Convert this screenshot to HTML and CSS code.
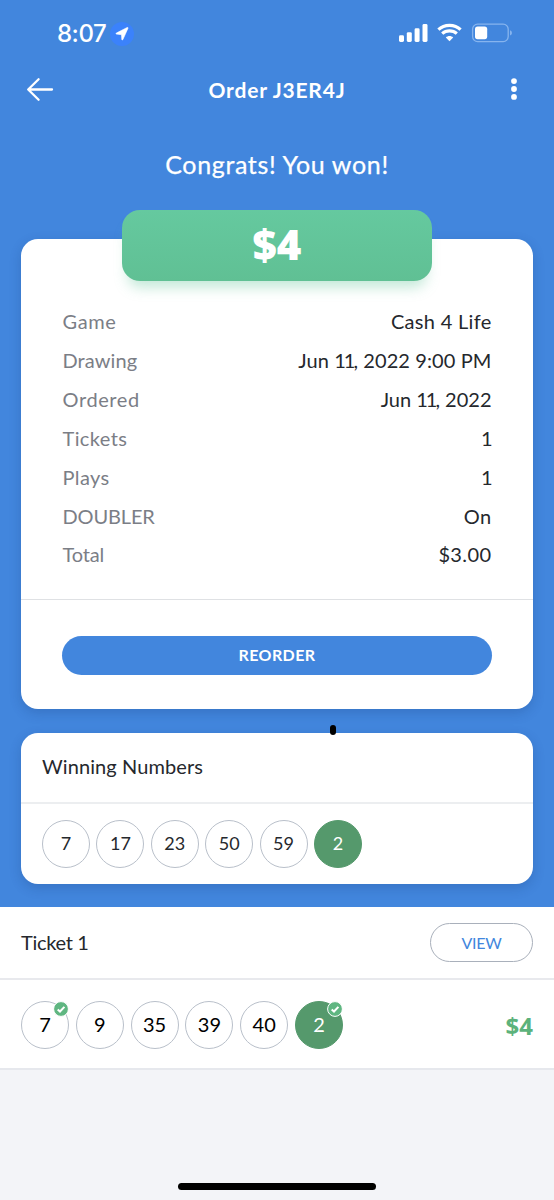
FILE: index.html
```html
<!DOCTYPE html>
<html lang="en">
<head>
<meta charset="utf-8">
<title>Order J3ER4J</title>
<link rel="stylesheet" href="styles.css">
</head>
<body>
<div class="screen">
  <div class="hero">
    <div class="status">
      <div class="status-left">
        <span class="time">8:07</span>
        <span class="location"><svg width="24" height="24" viewBox="0 0 24 24"><path d="M18 6.2 12.8 17.7Q12.2 18.6 11.8 17.4L11.5 12.7 6.4 12.1Q5.4 11.7 6.3 11.1L17.2 5.5Q18.2 5.2 18 6.2Z" fill="#fff" stroke="#fff" stroke-width=".6"/></svg></span>
      </div>
      <svg class="status-icons" width="114" height="20" viewBox="0 0 114 20">
        <g fill="#fff">
          <rect x="0" y="12.3" width="5" height="6.7" rx="1.4"/>
          <rect x="7.8" y="9.2" width="5" height="9.8" rx="1.4"/>
          <rect x="15.6" y="5.3" width="5" height="13.7" rx="1.4"/>
          <rect x="23.5" y="1" width="5" height="18" rx="1.4"/>
        </g>
        <g fill="none" stroke="#fff" stroke-width="3.1">
          <path d="M39.4 6.7C45.3.9 55.7.9 61.6 6.7"/>
          <path d="M43.2 10.7C47.2 6.9 53.8 6.9 57.8 10.7"/>
        </g>
        <path d="M46.8 14.4C48.9 12.4 52.1 12.4 54.2 14.4L50.5 18.3Z" fill="#fff"/>
        <rect x="73.6" y="1.2" width="35.6" height="17.4" rx="5" fill="none" stroke="#86b4ee" stroke-width="1.3"/>
        <rect x="76" y="3.6" width="12.2" height="12.6" rx="2.6" fill="#fff"/>
        <path d="M111 7.2Q113 8 113 9.9T111 12.6Z" fill="#86b4ee"/>
      </svg>
    </div>
    <div class="nav">
      <svg width="28" height="26" viewBox="0 0 28 26"><path d="M26 12.5H2.4M12.6 2.3 2.2 12.5 12.6 22.7" fill="none" stroke="#fff" stroke-width="2.3" stroke-linecap="round" stroke-linejoin="round"/></svg>
      <h1 class="title">Order J3ER4J</h1>
      <svg class="more" width="6" height="22" viewBox="0 0 6 22" fill="#fff"><circle cx="3" cy="3.1" r="2.9"/><circle cx="3" cy="11" r="2.9"/><circle cx="3" cy="18.9" r="2.9"/></svg>
    </div>
    <p class="congrats"><span>Congrats! You won!</span></p>
    <div class="card order">
      <div class="prize"><span>$4</span></div>
      <dl class="details">
        <div class="row"><dt class="loose">Game</dt><dd class="v-game">Cash 4 Life</dd></div>
        <div class="row"><dt class="snug">Drawing</dt><dd class="v-drawing">Jun <span class="day">11</span>, 2022 9:00 PM</dd></div>
        <div class="row"><dt class="loose">Ordered</dt><dd class="v-ordered">Jun <span class="day">11</span>, 2022</dd></div>
        <div class="row"><dt>Tickets</dt><dd class="single">1</dd></div>
        <div class="row"><dt>Plays</dt><dd class="single">1</dd></div>
        <div class="row"><dt class="tight">DOUBLER</dt><dd>On</dd></div>
        <div class="row"><dt class="tight">Total</dt><dd>$3.00</dd></div>
      </dl>
      <div class="actions"><button class="reorder">REORDER</button></div>
    </div>
    <div class="card winning">
      <span class="dot"></span>
      <h2 class="winning-title">Winning Numbers</h2>
      <div class="balls">
        <span class="ball">7</span><span class="ball">17</span><span class="ball">23</span><span class="ball">50</span><span class="ball">59</span><span class="ball special">2</span>
      </div>
    </div>
  </div>
  <div class="ticket">
    <div class="ticket-head"><h2 class="ticket-title">Ticket 1</h2><button class="view">VIEW</button></div>
    <div class="ticket-row">
      <div class="balls picks">
        <span class="ball">7<svg class="check" width="16" height="16" viewBox="0 0 16 16"><circle cx="8" cy="8" r="7.4" fill="#5fb681" stroke="#fff"/><path d="M4.7 8.4 7 10.5 11.4 5.9" fill="none" stroke="#fff" stroke-width="2"/></svg></span><span class="ball">9</span><span class="ball">35</span><span class="ball">39</span><span class="ball">40</span><span class="ball special">2<svg class="check" width="16" height="16" viewBox="0 0 16 16"><circle cx="8" cy="8" r="7.4" fill="#5fb681" stroke="#fff"/><path d="M4.7 8.4 7 10.5 11.4 5.9" fill="none" stroke="#fff" stroke-width="2"/></svg></span>
      </div>
      <span class="amount">$4</span>
    </div>
  </div>
  <div class="home"></div>
</div>
</body>
</html>
```
FILE: styles.css
```css
* { box-sizing: border-box; margin: 0; padding: 0; }
body { font-family: Lato, "Open Sans", sans-serif; color: #25282d; background: #f3f4f8; }
button { font-family: inherit; }
.screen { width: 554px; height: 1200px; display: flex; flex-direction: column; background: #f3f4f8; overflow: hidden; }
.hero { height: 907px; flex: none; background: #4286dd; padding: 0 21px; }
.status { height: 66px; margin: 0 20px 0 36px; display: flex; justify-content: space-between; align-items: center; color: #fff; }
.status-left { display: flex; align-items: center; gap: 4px; padding-top: 2px; }
.time { font: 500 24px/30px Inter, sans-serif; letter-spacing: -0.5px; }
.location { display: flex; width: 24px; height: 24px; border-radius: 12px; background: #3b82fb; }
.nav { height: 48px; padding: 0 5px; display: grid; grid-template-columns: 1fr auto 1fr; align-items: center; }
.more { justify-self: end; margin: -2px 11px 0 0; }
.title { color: #fff; font-size: 21px; font-weight: 700; line-height: 24px; letter-spacing: .8px; margin-top: -1px; }
.congrats { height: 102px; padding-top: 35px; text-align: center; color: #fff; font-size: 25px; line-height: 30px; letter-spacing: .65px; -webkit-text-stroke: .25px #fff; }
.card { background: #fff; border-radius: 17px; box-shadow: 0 4px 12px rgba(20,50,110,.22); }
.order { margin-top: 22.5px; height: 470px; display: flex; flex-direction: column; }
.prize { flex: none; width: 310px; height: 71px; padding-bottom: 3px; margin: -28.5px auto 0; border-radius: 18px; background: linear-gradient(#65c99f, #60c094); box-shadow: 0 12px 14px -6px rgba(98,194,152,.4); color: #fff; display: flex; justify-content: center; align-items: center; font: 800 42px/50px "Open Sans", sans-serif; }
.details { height: 319px; padding: 21px 41.5px 0; border-bottom: 1px solid #dfe1e4; }
.row { height: 38.85px; display: flex; justify-content: space-between; align-items: center; font-size: 20px; line-height: 24px; letter-spacing: .4px; }
.row dt { color: #7b7e86; }
.row .loose { letter-spacing: .6px; }
.row .snug { letter-spacing: .1px; }
.row .tight { letter-spacing: -.15px; }
.row .single { letter-spacing: -1px; }
.v-game { letter-spacing: .3px; }
.v-drawing { letter-spacing: .1px; }
.v-ordered { letter-spacing: 0; }
.day { letter-spacing: -2px; }
.actions { padding: 35.5px 41px 0; }
.reorder { display: block; width: 430px; height: 39px; padding-bottom: 2px; border: 0; border-radius: 20px; background: #4286dd; color: #fff; font-size: 16px; font-weight: 700; letter-spacing: .4px; }
.winning { margin-top: 24px; height: 151px; position: relative; }
.dot { position: absolute; left: 309px; top: -8px; width: 6px; height: 10px; border-radius: 3px; background: #000; }
.winning-title { height: 71px; padding-left: 21px; font-weight: 400; font-size: 20px; line-height: 67px; letter-spacing: .1px; border-bottom: 2px solid #eceef0; }
.balls { display: flex; gap: 6.4px; padding: 16px 21px 0; }
.ball { width: 48px; height: 48px; border: 1.4px solid #b9c0ca; border-radius: 50%; display: flex; align-items: center; justify-content: center; font-size: 18px; padding-bottom: 1px; position: relative; }
.special { background: #55996c; border-color: #55996c; color: #fff; }
.ticket { height: 163px; flex: none; background: #fff; border-bottom: 2px solid #e6e8ed; }
.ticket-head { height: 73px; padding: 0 21px; display: flex; align-items: center; justify-content: space-between; border-bottom: 2px solid #e8e9ed; }
.ticket-title { font-size: 20px; font-weight: 400; letter-spacing: -.3px; padding-bottom: 1px; }
.view { width: 103px; height: 39px; border: 1.4px solid #a9b0bb; border-radius: 20px; background: #fff; color: #4286dd; font-size: 16px; letter-spacing: -.3px; }
.ticket-row { height: 88px; padding: 1px 21px 0; display: flex; align-items: center; justify-content: space-between; }
.picks { padding: 0; gap: 6.8px; color: #000; }
.picks .ball { font-size: 20px; padding-bottom: 2px; }
.check { position: absolute; top: -1px; right: -1px; }
.amount { color: #5cb27b; font: 700 24px/28px "Open Sans", sans-serif; padding-top: 3px; }
.home { width: 198px; height: 7px; border-radius: 4px; background: #000; margin: 113px auto 0; }
```
